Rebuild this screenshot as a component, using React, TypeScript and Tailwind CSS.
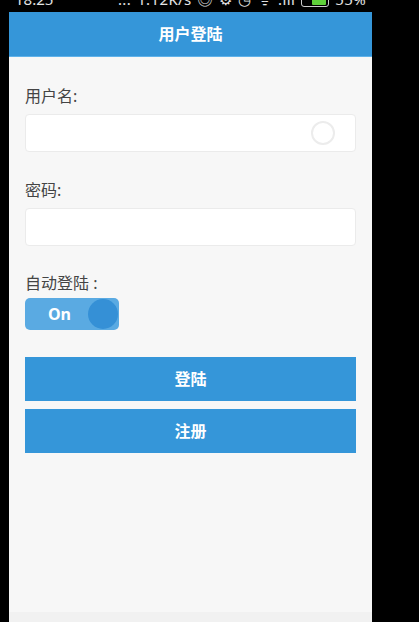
import React from "react";

const font = { fontFamily: '"Noto Sans", "Noto Sans CJK SC", sans-serif' };

const StatusBar = () => (
  <div className="relative h-[12px] overflow-hidden bg-black text-white">
    <div className="absolute bottom-[5px] left-0 right-0 flex items-end justify-between pl-[6px] pr-[6px] text-[15px] leading-[16px] text-white/90">
      <span>18:25</span>
      <span className="flex items-end gap-[6px] tracking-wide">
        <span>...</span>
        <span>1.12K/s</span>
        <span>◎</span>
        <span>⚙</span>
        <span>◷</span>
        <span>ᯤ</span>
        <span>.ıll</span>
        <span className="inline-flex h-[12px] w-[28px] items-center rounded-[3px] border border-white/80 px-[2px]">
          <span className="ml-auto h-[8px] w-[14px] rounded-[1px] bg-[#5fd03a]" />
        </span>
        <span>55%</span>
      </span>
    </div>
  </div>
);

const Label = ({ children }: { children: React.ReactNode }) => (
  <div className="h-[20px] overflow-visible text-[16px] leading-[20px] whitespace-pre text-[#444]">{children}</div>
);

const Field = ({ label, clear }: { label: string; clear?: boolean }) => (
  <div className="flex flex-col">
    <Label>{label}</Label>
    <div className="mt-[8px] flex h-[38px] items-center justify-end rounded-[4px] border border-[#ebebeb] bg-white pr-[20px]">
      {clear && (
        <span className="h-[24px] w-[24px] rounded-full border-2 border-[#ececec] bg-white" />
      )}
    </div>
  </div>
);

export default function App() {
  return (
    <div className="flex h-[622px] w-[419px] bg-black" style={font}>
      <div className="ml-[9px] flex w-[363px] flex-col">
        <StatusBar />
        <header className="flex h-[45px] items-center justify-center border-b border-[#5fb2ea] bg-[#3596d9] text-[16px] font-bold text-white">
          用户登陆
        </header>
        <main className="flex flex-1 flex-col bg-[#f7f7f7] px-[16px] pt-[29px]">
          <Field label="用户名:" clear />
          <div className="mt-[28px]">
            <Field label="密码:" />
          </div>
          <div className="mt-[27px]">
            <Label>{"自动登陆 :"}</Label>
          </div>
          <div className="mt-[5px] flex h-[32px] w-[94px] items-center rounded-[5px] bg-[#5aaae2] pr-[1px]">
            <span className="flex-1 pl-[6px] text-center text-[16px] font-bold leading-[20px] text-white">On</span>
            <span className="h-[30px] w-[30px] rounded-full bg-[#3590d6]" />
          </div>
          <button className="mt-[27px] h-[44px] w-full bg-[#3596d9] text-[16px] font-bold text-white">登陆</button>
          <button className="mt-[8px] h-[44px] w-full bg-[#3596d9] text-[16px] font-bold text-white">注册</button>
          <div className="flex-1" />
        </main>
        <div className="h-[10px] bg-[#f1f1f1]" />
      </div>
    </div>
  );
}
